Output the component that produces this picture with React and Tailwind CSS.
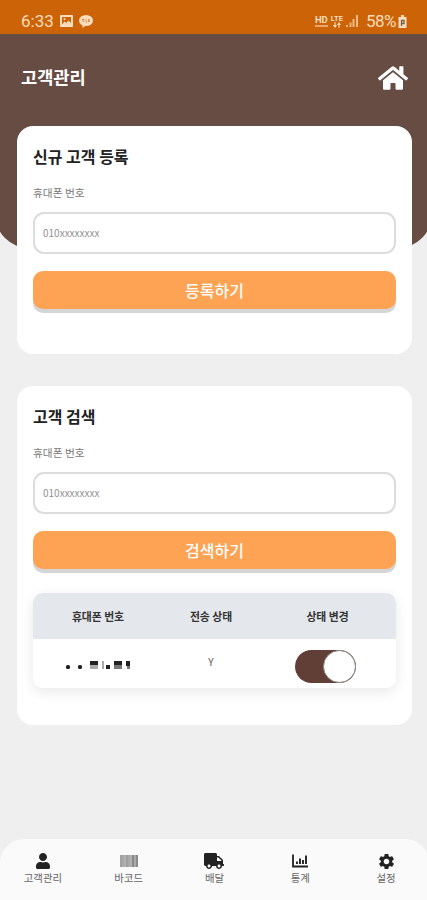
import { useState } from 'react';
import { FaHome, FaTruck, FaUser } from 'react-icons/fa';
import { MdSettings } from 'react-icons/md';

const NAV_ITEMS = [
  { label: '고객관리', icon: <UserIcon /> },
  { label: '바코드', icon: <BarcodeIcon /> },
  { label: '배달', icon: <FaTruck className="size-[20px]" /> },
  { label: '통계', icon: <ChartIcon /> },
  { label: '설정', icon: <MdSettings className="size-[19px]" /> }
];

function UserIcon() {
  return <FaUser className="h-[16px] w-[14px]" />;
}

function BarcodeIcon() {
  return (
    <svg width="18" height="12" viewBox="0 0 18 12">
      <rect width="18" height="12" fill="#a9a9a9" />
      <path d="M1 0v12M7 0v12" stroke="#989898" />
      <path d="M5 0v12M11 0v12" stroke="#b8b8b8" />
      <path d="M13 0v12M17 0v12" stroke="#7f7f7f" strokeWidth="1.5" />
    </svg>
  );
}

function ChartIcon() {
  return (
    <svg width="16" height="14" viewBox="0 0 16 14" fill="none" stroke="currentColor">
      <path d="M1 0.5V12.5H16" strokeWidth="1.8" />
      <path d="M5 7.500V10M8 4.500V10M11 6V10M14 1.500V10" strokeWidth="1.9" />
    </svg>
  );
}

function StatusBar() {
  return (
    <div className="flex h-[34px] shrink-0 items-start justify-between bg-[#cc6407] pt-[11px] pr-[20px] pl-[21px] font-['Roboto',sans-serif] text-[#fbdcbc]">
      <div className="flex items-center">
        <span className="text-[17px] leading-5">6:33</span>
        <svg className="ml-[6px]" width="13" height="12" viewBox="0 0 13 12">
          <rect width="13" height="12" rx="1" fill="#fbdcbc" />
          <path d="M2 9.500V2h9v6L8.500 5.500 6.500 8 4.500 6.500z" fill="#cc6407" />
          <circle cx="4.500" cy="4" r="1" fill="#fbdcbc" />
        </svg>
        <svg className="ml-[6px]" width="14" height="13" viewBox="0 0 14 13">
          <ellipse cx="7" cy="5.500" rx="7" ry="5.500" fill="#fbdcbc" />
          <path d="M3.500 9v4l4-3z" fill="#fbdcbc" />
          <path d="M3 4.500h2.500M4.200 4.500v2.500M7 4.500v2.500h1M9.500 4v3M11 4.500l-1.500 1.200L11 7" stroke="#d98c4a" fill="none" />
        </svg>
      </div>
      <div className="flex items-center">
        <div className="flex flex-col items-center">
          <span className="text-[9.5px] leading-[9px] font-bold">HD</span>
          <span className="mt-px h-[2px] w-[13px] bg-[#e8a873]" />
        </div>
        <div className="ml-[3px] flex flex-col items-center">
          <span className="text-[7.5px] leading-[7px] font-bold">LTE</span>
          <svg width="8" height="6" viewBox="0 0 8 6" fill="#fbdcbc">
            <path d="M0 3h1.500V0h1v3H4L2 6zM4 3l2-3 2 3H6.500v3h-1V3z" />
          </svg>
        </div>
        <svg className="ml-[3px]" width="12" height="12" viewBox="0 0 12 12" fill="#f0b98a">
          <path d="M0 10h2v2H0zM3.500 7.500h2V12h-2zM6.500 4h2v8h-2zM10 0h2v12h-2z" />
        </svg>
        <span className="ml-[8px] text-[17px] leading-5 tracking-[-0.5px]">58%</span>
        <svg className="ml-[2px]" width="9" height="13" viewBox="0 0 9 13">
          <path d="M3 0h3v2h2.500v11h-8V2H3z" fill="#fbdcbc" />
          <path d="M3.500 11V5.500H6V8.500H3.500" stroke="#70614e" fill="none" strokeWidth="1.300" />
        </svg>
      </div>
    </div>
  );
}

function PhoneForm({ title, button }) {
  return (
    <form onSubmit={(e) => e.preventDefault()}>
      <h2 className="pt-[18px] text-[16px] leading-6 font-bold text-[#222]">{title}</h2>
      <label className="mt-[17px] block text-[10.7px] leading-4 text-[#777]">휴대폰 번호</label>
      <input
        className="mt-[11px] block h-[42px] w-full rounded-[11px] border-2 border-[#dcdcdc] bg-white px-[8px] pb-[2px] text-[10px] outline-none placeholder:text-[#929292]"
        placeholder="010xxxxxxxx"
      />
      <button className="mt-[17px] block h-[38px] w-full rounded-[10px] bg-[#fea354] text-[16px] leading-[38px] font-medium text-white shadow-[0_4px_0_#d5d5d5]">
        {button}
      </button>
    </form>
  );
}

// Masked phone number shown in the result row
function MaskedNumber() {
  return (
    <svg className="mt-[4px]" width="66" height="10" viewBox="0 0 66 10" fill="#222">
      <rect x="1" y="4" width="4" height="4" rx="1.500" />
      <rect x="13" y="4" width="4" height="4" rx="1.500" />
      <path d="M25 0h8v4h-8zM41 4h4v4h-4zM49 0h8v4h-8zM61 0h4v5h-4z" />
      <path d="M25 4h8v4h-8zM37 0h2v8h-2z" fill="#aaa" />
      <path d="M49 4h8v4h-8zM62 5h3v3h-3z" fill="#777" />
    </svg>
  );
}

export default function App() {
  const [active, setActive] = useState(true);

  return (
    <div className="flex h-[900px] w-full flex-col overflow-hidden bg-[#efefef] font-['Noto_Sans_CJK_KR',sans-serif]">
      <StatusBar />

      {/* Header */}
      <header className="-mx-[5px] h-[214px] shrink-0 rounded-b-[34px] bg-[#664c42] px-[5px]">
        <div className="flex items-center justify-between pt-[25px] pr-[19px] pl-[21px]">
          <h1 className="text-[17.6px] leading-9 font-bold text-white">고객관리</h1>
          <FaHome className="mt-[2px] size-[30px] text-white" />
        </div>
      </header>

      {/* Content */}
      <main className="-mt-[122px] flex flex-1 flex-col gap-[32px] pr-[15px] pl-[17px]">
        <section className="h-[228px] rounded-[16px] bg-white px-[16px]">
          <PhoneForm title="신규 고객 등록" button="등록하기" />
        </section>

        <section className="h-[339px] rounded-[16px] bg-white px-[16px]">
          <PhoneForm title="고객 검색" button="검색하기" />
          <div className="mt-[24px] overflow-hidden rounded-[10px] shadow-[0_4px_14px_rgba(0,0,0,0.09)]">
            <div className="grid h-[46px] grid-cols-[130px_96px_137px] items-center bg-[#e4e7ec] text-center text-[10.8px] font-bold text-[#333]">
              <span>휴대폰 번호</span>
              <span>전송 상태</span>
              <span>상태 변경</span>
            </div>
            <div className="grid h-[49px] grid-cols-[130px_96px_137px] items-center justify-items-center bg-white">
              <MaskedNumber />
              <span className="pb-[4px] text-[10px] text-[#555]">Y</span>
              <button
                onClick={() => setActive(!active)}
                className={`mt-[6px] flex h-[33px] w-[61px] -translate-x-[2px] rounded-full ${active ? 'justify-end bg-[#623f36]' : 'justify-start bg-gray-300'}`}
              >
                <span className="size-[33px] rounded-full border border-[#8b8583] bg-white" />
              </button>
            </div>
          </div>
        </section>
      </main>

      {/* Bottom navigation */}
      <nav className="-mr-[2px] grid h-[61px] shrink-0 grid-cols-5 rounded-t-[24px] bg-[#fafafa] pt-[12px] text-[#222]">
        {NAV_ITEMS.map((item) => (
          <div key={item.label} className="flex flex-col items-center">
            <span className="flex h-5 items-center">{item.icon}</span>
            <span className="text-[10.4px] leading-[14px] text-[#666]">{item.label}</span>
          </div>
        ))}
      </nav>
    </div>
  );
}
